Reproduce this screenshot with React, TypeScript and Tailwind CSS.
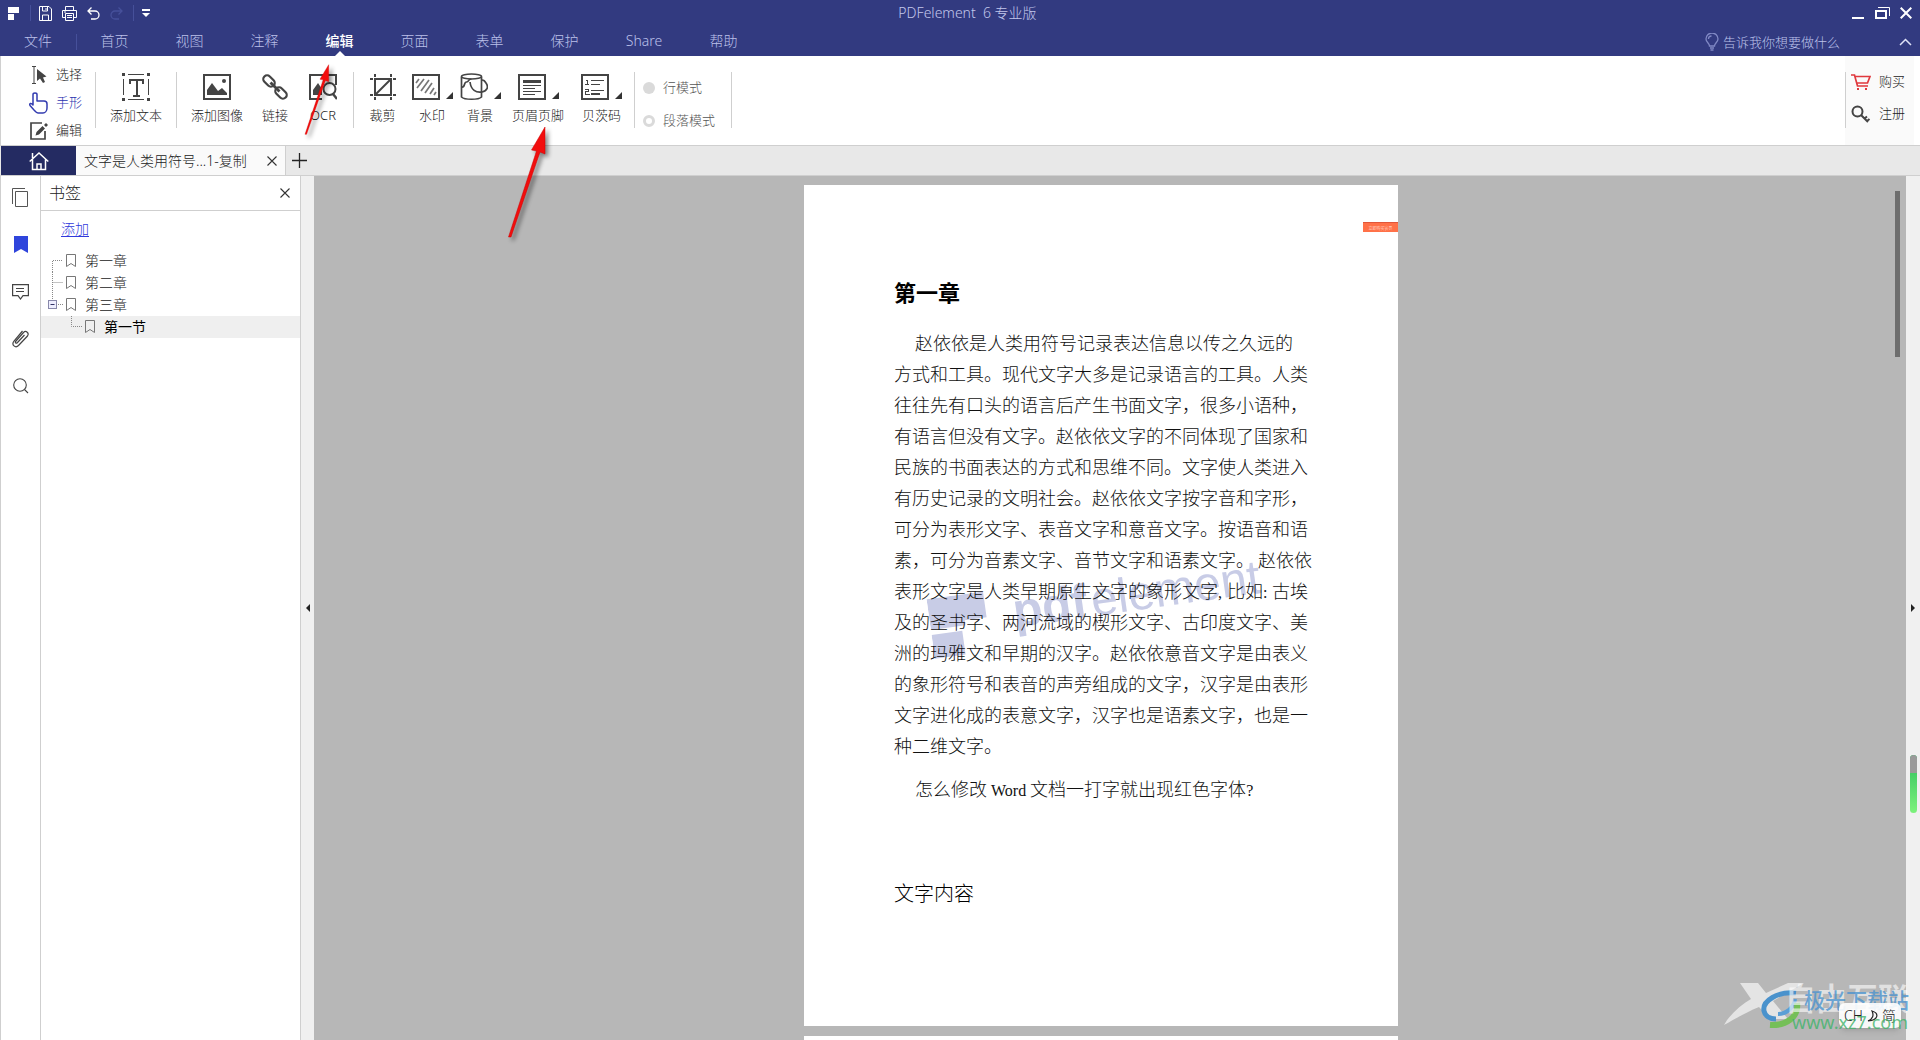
import React, { useState } from 'react';
import clsx from 'clsx';

const menuItems = ['首页', '视图', '注释', '编辑', '页面', '表单', '保护', 'Share', '帮助'];

const chapterLines: React.ReactNode[] = [
  '方式和工具。现代文字大多是记录语言的工具。人类',
  '往往先有口头的语言后产生书面文字，很多小语种，',
  '有语言但没有文字。赵依依文字的不同体现了国家和',
  '民族的书面表达的方式和思维不同。文字使人类进入',
  '有历史记录的文明社会。赵依依文字按字音和字形，',
  '可分为表形文字、表音文字和意音文字。按语音和语',
  '素，可分为音素文字、音节文字和语素文字。 赵依依',
  <>表形文字是人类早期原生文字的象形文字<Latin>,</Latin>比如<Latin>:</Latin>古埃</>,
  '及的圣书字、两河流域的楔形文字、古印度文字、美',
  '洲的玛雅文和早期的汉字。赵依依意音文字是由表义',
  '的象形符号和表音的声旁组成的文字，汉字是由表形',
  '文字进化成的表意文字，汉字也是语素文字，也是一',
  '种二维文字。',
];

// half-width characters inside the document text
function Latin({ children }: { children: React.ReactNode }) {
  return (
    <span className="inline-block min-w-[9px] font-['Liberation_Serif',serif] text-base leading-none">{children}</span>
  );
}

/* ---------- icons ---------- */

function TextIcon() {
  return (
    <svg width="28" height="28" viewBox="0 0 28 28" fill="none" stroke="#444" shapeRendering="crispEdges">
      <path d="M6 1.5h16M6 26.5h16M1.5 6v16M26.5 6v16" />
      <path d="M0 0h3v3H0zM25 0h3v3h-3zM0 25h3v3H0zM25 25h3v3h-3z" fill="#444" stroke="none" />
      <path d="M8 10.5V7h13v3.5M14.5 7v15M11 22.5h7" strokeWidth="2" />
    </svg>
  );
}

function ImageIcon() {
  return (
    <svg width="28" height="28" viewBox="0 0 28 28" fill="none">
      <rect x="1" y="2" width="26" height="24" stroke="#444" strokeWidth="2" />
      <path d="M4 22v-5l5-7 6 8 4-3 5 5v2z" fill="#444" />
      <circle cx="21" cy="8" r="2" fill="#444" />
    </svg>
  );
}

function LinkIcon() {
  return (
    <svg width="28" height="28" viewBox="0 0 28 28" fill="none" stroke="#444" strokeWidth="2.2">
      <rect x="-6.5" y="-3.8" width="13" height="7.6" rx="3.8" transform="translate(8 8) rotate(45)" />
      <rect x="-6.5" y="-3.8" width="13" height="7.6" rx="3.8" transform="translate(20 20) rotate(45)" />
      <path d="M9.5 9.5l9 9" strokeWidth="2.8" />
    </svg>
  );
}

function OcrIcon() {
  return (
    <svg width="28" height="28" viewBox="0 0 28 28" fill="none" stroke="#444" strokeWidth="2">
      <path d="M27 12V2H1v24h12" />
      <path d="M4 22v-5l5-7 4 6v6z" fill="#444" stroke="none" />
      <circle cx="20.5" cy="16" r="6" />
      <path d="M24 21l4 5" strokeWidth="2.4" />
    </svg>
  );
}

function CropIcon() {
  return (
    <svg width="28" height="28" viewBox="0 0 28 28" fill="none" stroke="#444" strokeWidth="2">
      <rect x="6" y="6" width="16" height="16" />
      <path d="M7 21L21 7" />
      <path d="M1 6h3M24 6h3M1 22h3M24 22h3M6 1v3M22 1v3M6 24v3M22 24v3" />
    </svg>
  );
}

function WatermarkIcon() {
  return (
    <svg width="28" height="28" viewBox="0 0 28 28" fill="none" stroke="#444">
      <rect x="1" y="2" width="26" height="24" strokeWidth="2" />
      <path d="M4 10l3-4M5 15l7-9M9 18l8-11M13 20l7-10M18 21l4-6M22 22l2-3" strokeWidth="1.7" stroke="#777" />
    </svg>
  );
}

function BackgroundIcon() {
  return (
    <svg width="28" height="28" viewBox="0 0 28 28" fill="none" stroke="#444" strokeWidth="1.7">
      <ellipse cx="11.500" cy="3.500" rx="10" ry="2.500" />
      <path d="M1.500 4v20c3 3 17 3 20 0V4" />
      <path d="M1.500 14c4 1 2-5 5-5s1-3 5-3" />
      <path d="M10 9c1 8 6 11 12 10 5-1 7-5 4-9-1-2-3-3-4-3" />
    </svg>
  );
}

function HeaderFooterIcon() {
  return (
    <svg width="28" height="28" viewBox="0 0 28 28" fill="none" stroke="#444" shapeRendering="crispEdges">
      <rect x="1" y="2" width="26" height="24" strokeWidth="2" />
      <path d="M5 8h18" strokeWidth="3" />
      <path d="M5 12.500h18M5 15.500h12M5 18.500h18M5 21.500h12" />
    </svg>
  );
}

function BatesIcon() {
  return (
    <svg width="28" height="28" viewBox="0 0 28 28" fill="none" stroke="#444" shapeRendering="crispEdges">
      <rect x="1" y="2" width="26" height="24" strokeWidth="2" />
      <path d="M4.500 7.500h2v4M4 11.500h4M4 16.500h3.500v2h-3v2.500h4" />
      <path d="M10 7.500h13M10 11.500h9M10 17.500h13M10 21h9" strokeWidth="1.500" />
    </svg>
  );
}

function CloseIcon() {
  return (
    <svg width="10" height="10" viewBox="0 0 10 10" stroke="#333" strokeWidth="1.1">
      <path d="M.5.5l9 9M9.500.5l-9 9" />
    </svg>
  );
}

function BookmarkIcon() {
  return (
    <svg width="11" height="14" viewBox="0 0 11 14" fill="none" stroke="#777">
      <path d="M.5.5h9v12L5 9.500l-4.500 3z" />
    </svg>
  );
}

/* ---------- chrome ---------- */

function TitleBar() {
  return (
    <div className="relative flex h-7 items-center justify-between px-2 pb-0.5 text-white">
      <div className="flex items-center">
        <svg width="12" height="14" viewBox="0 0 12 14" fill="#fff">
          <path d="M0 1h11v6H0zM0 8h6v6H0z" />
        </svg>
        <span className="ml-2.5 h-4 w-px bg-[#46509a]" />
        <button aria-label="保存" className="ml-2">
          <svg width="13" height="15" viewBox="0 0 13 15" fill="none" stroke="#fff">
            <path d="M.5.5h9.500l2.500 2.500v11.500H.5z" />
            <path d="M3.500.5V5h5V.5M3.500 14.500V9h6v5.500M7 2v2" />
          </svg>
        </button>
        <button aria-label="打印" className="ml-2.5">
          <svg width="15" height="15" viewBox="0 0 15 15" fill="none" stroke="#fff">
            <path d="M3.500 4V.5h8V4M3 11.500H.5v-7h14v7H12" />
            <path d="M3.500 7.500h8v7h-8zM5 9.500h5M5 11.500h5M2 6h2" />
          </svg>
        </button>
        <button aria-label="撤销" className="ml-2.5">
          <svg width="13" height="13" viewBox="0 0 13 13" fill="none" stroke="#fff" strokeWidth="1.300">
            <path d="M4.500.5L1 4l3.500 3.500M1 4h7a4 4 0 0 1 0 8H4" />
          </svg>
        </button>
        <button aria-label="重做" className="ml-2.5">
          <svg width="13" height="13" viewBox="0 0 13 13" fill="none" stroke="#46509a" strokeWidth="1.300">
            <path d="M8.500.5L12 4 8.500 7.500M12 4H5a4 4 0 0 0 0 8h4" />
          </svg>
        </button>
        <span className="ml-2.5 h-4 w-px bg-[#46509a]" />
        <button aria-label="自定义" className="ml-2">
          <svg width="8" height="8" viewBox="0 0 8 8" fill="#fff">
            <path d="M0 0h8v2H0zM0 4h8L4 8z" />
          </svg>
        </button>
      </div>
      <h1 className="pointer-events-none absolute inset-x-0 mr-[-15px] text-center text-sm whitespace-pre text-[#c3c8ec]">
        {'PDFelement  6 专业版'}
      </h1>
      <div className="flex items-center gap-2.5">
        <button aria-label="最小化">
          <svg width="13" height="12" viewBox="0 0 13 12" fill="#fff">
            <path d="M0 10h12v2H0z" />
          </svg>
        </button>
        <button aria-label="还原">
          <svg width="15" height="12" viewBox="0 0 15 12" fill="none" stroke="#fff">
            <path d="M1 4h10v7H1z" strokeWidth="2" />
            <path d="M3 .5h11.500V9" />
          </svg>
        </button>
        <button aria-label="关闭">
          <svg width="12" height="12" viewBox="0 0 12 12" stroke="#fff" strokeWidth="2">
            <path d="M.7.7l10.600 10.600M11.300.7L.7 11.300" />
          </svg>
        </button>
      </div>
    </div>
  );
}

function MenuBar({ active, onSelect }: { active: string; onSelect: (m: string) => void }) {
  return (
    <nav className="flex h-7 items-center text-sm text-[#bcc1ea]">
      <button className="h-full w-[76px] pb-0.5">文件</button>
      <span className="h-4 w-px bg-[#46509a]" />
      {menuItems.map((item) => (
        <button
          key={item}
          onClick={() => onSelect(item)}
          className={clsx(
            'relative h-full pb-0.5',
            item === 'Share' ? 'w-[84px]' : 'w-[75px]',
            item === active && 'font-medium text-white'
          )}
        >
          {item}
          {item === active && (
            <svg className="absolute bottom-0 left-1/2 -translate-x-1/2" width="10" height="5" viewBox="0 0 10 5" fill="#fff">
              <path d="M5 0l5 5H0z" />
            </svg>
          )}
        </button>
      ))}
      <label className="ml-auto flex items-center gap-1">
        <svg width="14" height="18" viewBox="0 0 14 18" fill="none" stroke="#8088c4" strokeWidth="1.300">
          <path d="M4.500 13c0-3-3.500-3.500-3.500-7a6 6 0 0 1 12 0c0 3.500-3.500 4-3.500 7zM5 15h4M5.500 17h3" />
          <path d="M3.500 6c0-2 1.500-3 3-3" />
        </svg>
        <input
          aria-label="搜索"
          placeholder="告诉我你想要做什么"
          className="w-44 bg-transparent text-[13px] outline-none placeholder:text-[#bcc1ea]"
        />
      </label>
      <button aria-label="收起" className="mr-2">
        <svg width="13" height="8" viewBox="0 0 13 8" fill="none" stroke="#dfe2f7" strokeWidth="1.500">
          <path d="M1 7l5.500-5.500L12 7" />
        </svg>
      </button>
    </nav>
  );
}

function Divider() {
  return <span className="mt-4 h-14 w-px shrink-0 bg-[#cfcfcf]" />;
}

function Tool({ icon, label, width, menu }: { icon: React.ReactNode; label: string; width: string; menu?: boolean }) {
  return (
    <button className={clsx('flex shrink-0 flex-col items-center pt-[17px]', width)}>
      <span className="flex items-end gap-1.5">
        {icon}
        {menu && (
          <svg width="7" height="7" viewBox="0 0 7 7" fill="#333" className="mb-0.5">
            <path d="M7 0v7H0z" />
          </svg>
        )}
      </span>
      <span className="mt-1 text-[13px] leading-5 whitespace-nowrap">{label}</span>
    </button>
  );
}

function Ribbon() {
  return (
    <div className="flex h-[89px] border-l border-[#d0d0d0] bg-white text-[#222]">
      <div className="flex w-[94px] flex-col pt-[5px] pl-7 text-[13px]">
        <button className="flex h-7 items-center gap-2">
          <svg width="19" height="18" viewBox="0 0 19 18" fill="none" stroke="#444">
            <path d="M3 .5h4M5 .5v17M3 17.500h4" />
            <path d="M8 3v12l3-2.500 3 4.500 2-1-2-4.500 3.500-1z" fill="#444" stroke="none" />
          </svg>
          选择
        </button>
        <button className="flex h-7 items-center gap-2 text-[#2a33b0]">
          <svg width="19" height="22" viewBox="0 0 19 22" fill="none" stroke="#333cb0" strokeWidth="1.500" strokeLinejoin="round">
            <path d="M4 13V2.500C4 .5 8 .5 8 2.500V9h7c2 0 3 1 3 3v4c0 3-2 5-4 5H9c-2 0-3-2-4-3l-4-4.500c-1-2 1-3 3-.5z" />
          </svg>
          手形
        </button>
        <button className="flex h-7 items-center gap-2">
          <svg width="19" height="18" viewBox="0 0 19 18" fill="none" stroke="#444" strokeWidth="1.700">
            <path d="M13 1H2v16h14V9" />
            <path d="M6.500 13.500l1-3.500 6-6 2.500 2.500-6 6zM15 3l2-2 2 2-2 2z" fill="#444" stroke="none" />
          </svg>
          编辑
        </button>
      </div>
      <Divider />
      <Tool icon={<TextIcon />} label="添加文本" width="w-20" />
      <Divider />
      <Tool icon={<ImageIcon />} label="添加图像" width="w-20" />
      <Tool icon={<LinkIcon />} label="链接" width="w-9" />
      <Tool icon={<OcrIcon />} label="OCR" width="w-[60px]" />
      <Divider />
      <Tool icon={<CropIcon />} label="裁剪" width="w-[57px]" />
      <Tool icon={<WatermarkIcon />} label="水印" width="w-[42px]" menu />
      <Tool icon={<BackgroundIcon />} label="背景" width="w-[54px]" menu />
      <Tool icon={<HeaderFooterIcon />} label="页眉页脚" width="w-[62px]" menu />
      <Tool icon={<BatesIcon />} label="贝茨码" width="w-[65px]" menu />
      <Divider />
      <fieldset className="flex w-24 flex-col pt-4 pl-2 text-[13px] text-[#555]">
        <label className="flex h-8 items-center gap-2">
          <input type="radio" name="mode" disabled className="size-3 appearance-none rounded-full bg-[#dadada]" />
          行模式
        </label>
        <label className="flex h-[34px] items-center gap-2">
          <input type="radio" name="mode" disabled className="size-3 appearance-none rounded-full border-3 border-[#dadada] bg-white" />
          段落模式
        </label>
      </fieldset>
      <Divider />
      <div className="mr-1.5 ml-auto flex bg-[#fafafa]">
        <Divider />
        <div className="flex w-[68px] flex-col pt-2.5 pl-[5px] text-[13px]">
          <button className="flex h-8 items-center gap-2">
            <svg width="20" height="17" viewBox="0 0 20 17" fill="none" stroke="#e0393e" strokeWidth="1.700">
              <path d="M0 1h3.500l3 11H17M4 2.500h15L16.500 9H6" />
              <path d="M6 14h2v2H6zM14 14h2v2h-2z" fill="#e0393e" stroke="none" />
            </svg>
            购买
          </button>
          <button className="flex h-8 items-center gap-2">
            <svg width="20" height="18" viewBox="0 0 20 18" fill="none" stroke="#444" strokeWidth="2">
              <circle cx="6.500" cy="6.500" r="5" />
              <path d="M10 10l7 7M13.500 13.500l2.500-2M16 16l2.500-2" />
            </svg>
            注册
          </button>
        </div>
      </div>
    </div>
  );
}

function TabStrip() {
  return (
    <div className="flex h-[31px] border-y border-[#cfcfcf] bg-[#e8e8e8] pl-px">
      <button aria-label="主页" className="flex w-[75px] items-center justify-center bg-[#242b62]">
        <svg width="20" height="20" viewBox="0 0 20 20" fill="none" stroke="#fff" strokeWidth="1.500">
          <path d="M.7 10.500L10 2l9.300 8.500M3.500 8.500v10h13v-10M3.500 7V2" />
          <path d="M8 19v-6h4v6" />
        </svg>
      </button>
      <div className="flex w-[210px] items-center justify-between border-r border-[#cfcfcf] bg-[#fafafa] px-2 text-sm text-[#222]">
        <span className="whitespace-nowrap">文字是人类用符号...1-复制</span>
        <button aria-label="关闭标签">
          <CloseIcon />
        </button>
      </div>
      <button aria-label="新建标签" className="ml-1.5">
        <svg width="15" height="15" viewBox="0 0 15 15" stroke="#222" strokeWidth="1.300">
          <path d="M7.500 0v15M0 7.500h15" />
        </svg>
      </button>
    </div>
  );
}

function SideRail() {
  return (
    <aside className="flex w-[41px] shrink-0 flex-col items-center border-x border-[#cfcfcf] bg-white">
      <button aria-label="缩略图" className="flex h-[47px] items-center pb-1">
        <svg width="17" height="19" viewBox="0 0 17 19" fill="none" stroke="#555">
          <path d="M13 .5H.5V16M3.500 3.500h12v15h-12z" />
        </svg>
      </button>
      <button aria-label="书签" className="flex h-[47px] items-center pb-1">
        <svg width="14" height="17" viewBox="0 0 14 17" fill="#2f45dc">
          <path d="M0 0h14v17l-7-4-7 4z" />
        </svg>
      </button>
      <button aria-label="注释" className="flex h-[47px] items-center pb-1">
        <svg width="17" height="16" viewBox="0 0 17 16" fill="none" stroke="#444" strokeWidth="1.200">
          <path d="M.6.6h15.800v11H11L8.500 15 6 11.600H.6zM4 4.500h8M4 7.500h8" />
        </svg>
      </button>
      <button aria-label="附件" className="flex h-[47px] items-center pb-1">
        <svg width="17" height="19" viewBox="0 0 17 19" fill="none" stroke="#444" strokeWidth="1.200">
          <path d="M12.500 6l-7 7.500c-1.500 1.500-3 0-1.500-1.500L11.500 3.500c2.500-2.500 6 .5 4 3.500l-9 9.500c-3 3-7.500-.5-4.500-4.500L10.500 2" />
        </svg>
      </button>
      <button aria-label="搜索" className="flex h-[47px] items-center pb-1">
        <svg width="16" height="16" viewBox="0 0 16 16" fill="none" stroke="#444" strokeWidth="1.100">
          <circle cx="7" cy="7" r="6.300" />
          <path d="M11.500 11.500L15 15" />
        </svg>
      </button>
    </aside>
  );
}

function BookmarkPanel() {
  return (
    <section className="flex w-[260px] shrink-0 flex-col border-r border-[#cfcfcf] bg-white text-[#222]">
      <header className="flex h-[35px] items-center justify-between border-b border-[#cfcfcf] pr-2.5 pl-2">
        <h2 className="text-base">书签</h2>
        <button aria-label="关闭书签">
          <CloseIcon />
        </button>
      </header>
      <a href="#add" className="mt-2 ml-5 self-start text-sm text-[#2f38dc] underline underline-offset-2">
        添加
      </a>
      <ul className="mt-[11px] text-sm leading-[22px]">
        {['第一章', '第二章', '第三章'].map((name, i) => (
          <li key={name}>
            <div className="flex h-[22px] items-center pl-[7px]">
              <svg width="18" height="22" viewBox="0 0 18 22" fill="none">
                <path
                  d={i === 0 ? 'M4.500 22V10.500H15' : i === 1 ? 'M4.500 0v22M4.500 10.500H15' : 'M4.500 0v6M10 10.500h5'}
                  stroke="#888"
                  strokeDasharray="1 1"
                />
                {i === 2 && (
                  <>
                    <rect x=".5" y="6.500" width="8" height="8" fill="#eef" stroke="#88a" />
                    <path d="M2.500 10.500h4" stroke="#336" />
                  </>
                )}
              </svg>
              <BookmarkIcon />
              <span className="ml-2">{name}</span>
            </div>
            {i === 2 && (
              <div className="flex h-[22px] items-center bg-[#efefef] pl-[26px] font-normal text-black">
                <svg width="18" height="22" viewBox="0 0 18 22" fill="none">
                  <path d="M4.500 0v10.500H15" stroke="#888" strokeDasharray="1 1" />
                </svg>
                <BookmarkIcon />
                <span className="ml-2">第一节</span>
              </div>
            )}
          </li>
        ))}
      </ul>
    </section>
  );
}

function PageWatermark() {
  return (
    <div className="absolute top-[406px] left-[127px] flex origin-left rotate-[-8deg] items-center gap-6 font-['Liberation_Sans',sans-serif] text-[48px] leading-[64px] font-normal text-[#c8cce6]">
      <svg width="60" height="64" viewBox="0 0 60 64" fill="#c8cce6">
        <path d="M0 0h57v26H35v5H0zM0 36h31v24H0z" />
      </svg>
      <span className="flex gap-1 pb-4 whitespace-nowrap">
        <b className="font-bold">pdf</b>
        <span>element</span>
      </span>
    </div>
  );
}

function Document() {
  return (
    <main className="relative flex min-w-0 flex-1 overflow-hidden bg-[#b7b7b7] pt-[9px]">
      <div className="flex flex-1 flex-col items-center gap-2.5">
        <article className="relative min-h-[841px] w-[594px] shrink-0 bg-white pt-[90px] pl-[90px] font-['Noto_Sans_CJK_SC',sans-serif] font-light text-[#111]">
          <PageWatermark />
          <span className="absolute top-[37px] right-0 flex h-2.5 w-[35px] items-center justify-center border-t border-[#e0563a] bg-[#ff7148] text-[4px] whitespace-nowrap text-[#ffe8e0]">
            立即购买会员
          </span>
          <div className="relative">
            <h2 className="text-[22px] leading-8 font-bold text-black">第一章</h2>
            <p className="mt-5 text-[18px] leading-[31px] whitespace-nowrap">
              <span className="block pl-[21px]">赵依依是人类用符号记录表达信息以传之久远的</span>
              {chapterLines.map((line, i) => (
                <span key={i} className="block">
                  {line}
                </span>
              ))}
            </p>
            <p className="mt-3 pl-[21px] text-[18px] leading-[31px] whitespace-nowrap">
              怎么修改 <Latin>Word</Latin> 文档一打字就出现红色字体<Latin>?</Latin>
            </p>
            <h3 className="mt-[74px] text-[20px] leading-[30px] text-black">文字内容</h3>
          </div>
        </article>
        <div className="w-[594px] flex-1 bg-white" />
      </div>
      <div className="w-[18px] shrink-0 pt-1.5 pl-[7px]">
        <div className="h-[166px] w-[5px] bg-[#6e6e6e]" />
      </div>
    </main>
  );
}

/* ---------- overlays ---------- */

function RedArrow({ className }: { className: string }) {
  return (
    <svg
      className={clsx('absolute drop-shadow-[3px_3px_2px_rgba(0,0,0,0.45)]', className)}
      viewBox="0 0 40 112"
      preserveAspectRatio="none"
      fill="#f20d0d"
      stroke="#c00"
      strokeWidth=".5"
    >
      <path d="M38 1v27l-5-2L4 111H1.500L29.500 25l-5-1z" />
    </svg>
  );
}

function SiteMarks() {
  return (
    <div className="pointer-events-none absolute right-0 bottom-0 h-16 w-[200px]">
      <svg className="absolute top-1.5 left-0" width="200" height="56" viewBox="0 0 200 56" fill="none">
        <path d="M20 1h18l8 10L68 1h16L53 19l15 18H50L39 25C24 31 10 40 4 43 10 32 21 23 31 17z" fill="#e4e4e4" />
        <path d="M76 11c-18-2-34 8-32 18 1 5 6 8 12 8" stroke="#4a92cc" strokeWidth="5" />
        <path d="M58 32c8 0 16-6 17-15" stroke="#5b9fd6" strokeWidth="4" />
        <path d="M50 43c16 1 29-8 27-22" stroke="#75bf58" strokeWidth="6" />
      </svg>
      <span className="absolute top-1 left-[65px] text-[31px] leading-9 font-bold whitespace-nowrap text-white/60">自由互联</span>
      <span className="absolute top-2.5 left-[84px] text-[21px] leading-7 font-medium whitespace-nowrap text-[#4b93cf]/80">极光下载站</span>
      <div className="absolute right-[19px] bottom-3 flex h-[25px] w-[62px] items-center justify-center gap-1 rounded-md bg-white/90 text-sm text-[#222] shadow-md">
        CH
        <svg width="11" height="12" viewBox="0 0 11 12" fill="none" stroke="#222" strokeWidth="1.200">
          <path d="M5 1c7 2 7 9-4 10 5-2 6-6 4-10z" />
        </svg>
        简
      </div>
      <span className="absolute right-3 bottom-2 text-[18px] leading-5 font-normal whitespace-nowrap text-[#3fb36a]/80">www.xz7.com</span>
    </div>
  );
}

export default function App() {
  const [active, setActive] = useState('编辑');

  return (
    <div className="relative flex h-screen flex-col overflow-hidden bg-[#f0f0f0] font-['Noto_Sans','Noto_Sans_CJK_SC',sans-serif] font-light">
      <div className="bg-[#323a80]">
        <TitleBar />
        <MenuBar active={active} onSelect={setActive} />
      </div>
      <Ribbon />
      <TabStrip />
      <div className="flex min-h-0 flex-1">
        <SideRail />
        <BookmarkPanel />
        <button aria-label="折叠面板" className="flex w-[13px] shrink-0 items-center justify-center bg-[#f0f0f0]">
          <svg width="4" height="8" viewBox="0 0 4 8" fill="#222">
            <path d="M4 0v8L0 4z" />
          </svg>
        </button>
        <Document />
        <button aria-label="展开面板" className="relative flex w-3.5 shrink-0 items-center justify-center bg-[#f0f0f0]">
          <svg width="4" height="8" viewBox="0 0 4 8" fill="#222">
            <path d="M0 0v8l4-4z" />
          </svg>
          <span className="absolute top-[579px] left-1 h-[58px] w-[7px] overflow-hidden rounded-full bg-gradient-to-b from-[#1fbf5c] to-[#7cf27c]">
            <span className="block h-[18px] bg-[#9a9a9a]" />
          </span>
        </button>
      </div>

      <RedArrow className="top-16 left-[304px] h-[71px] w-[26px]" />
      <RedArrow className="top-[126px] left-[507px] h-[112px] w-10" />
      <SiteMarks />
    </div>
  );
}
